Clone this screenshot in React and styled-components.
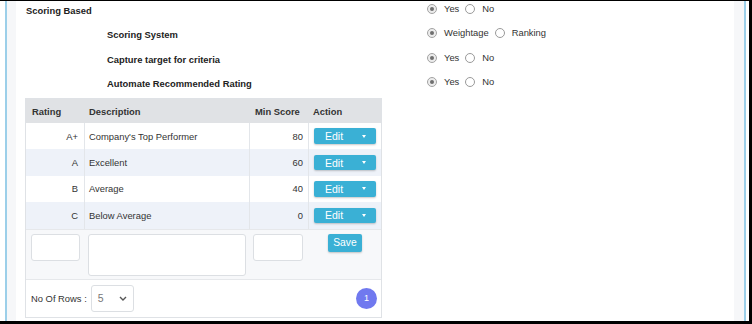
import React from "react";
import styled, { createGlobalStyle } from "styled-components";

const GlobalStyle = createGlobalStyle`
  html, body { margin: 0; padding: 0; background: #fff; }
  body { font-family: "Liberation Sans", Arial, sans-serif; }
  *, *::before, *::after { box-sizing: border-box; }
`;

const Frame = styled.div`
  width: 752px;
  height: 324px;
  border-top: 1px solid #000;
  border-right: 3px solid #000;
  border-bottom: 3px solid #000;
  background: #fff;
  padding: 0 3px 0 5px;
  display: flex;
`;

const Rail = styled.div`
  flex: 1;
  display: flex;
  border-left: 2px solid #9ccfe9;
  border-right: 2px solid #9ccfe9;
  background: #f6f7f9;
  padding: 0 10px 0 9px;
`;

const Main = styled.main`
  flex: 1;
  background: #fff;
  padding-left: 9px;
  display: flex;
  flex-direction: column;
  font-size: 9.4px;
  color: #333;
`;

const Form = styled.section`
  display: flex;
  flex-direction: column;
`;

const FormRow = styled.div`
  height: 24.25px;
  display: flex;
  align-items: flex-start;
`;

const Label = styled.div`
  width: 402px;
  padding-left: ${(p) => (p.$sub ? 82 : 1)}px;
  margin-top: 4px;
  font-weight: bold;
  color: #222;
  line-height: 11px;
`;

const Options = styled.div`
  margin-top: 3px;
  height: 10px;
  display: flex;
  align-items: center;
`;

const Radio = styled.span`
  width: 10px;
  height: 10px;
  border-radius: 50%;
  border: 1px solid ${(p) => (p.$on ? "#a3a3a3" : "#9a9a9a")};
  background: ${(p) => (p.$on ? "#ececec" : "#fff")};
  display: flex;
  align-items: center;
  justify-content: center;
  margin-right: 7px;
  &::after {
    content: "";
    width: 4px;
    height: 4px;
    border-radius: 50%;
    background: ${(p) => (p.$on ? "#6f6f6f" : "transparent")};
  }
`;

const OptText = styled.span`
  color: #333;
  line-height: 10px;
  margin-right: 6px;
`;

const Table = styled.div`
  width: 357px;
  border: 1px solid #dfe2e6;
  display: flex;
  flex-direction: column;
`;

const Grid = styled.div`
  display: grid;
  grid-template-columns: 58px 165px 59px 73px;
  height: ${(p) => p.$h}px;
  background: ${(p) => p.$bg};
`;

const Cell = styled.div`
  display: flex;
  align-items: center;
  justify-content: ${(p) => (p.$right ? "flex-end" : "flex-start")};
  padding: 0 ${(p) => p.$pr || 0}px 0 ${(p) => p.$pl || 0}px;
  border-left: ${(p) => (p.$line ? "1px solid #e3e6ea" : "none")};
  font-weight: ${(p) => (p.$head ? "bold" : "normal")};
  color: #333;
  white-space: nowrap;
`;

const EditButton = styled.button`
  width: 62px;
  height: 15.5px;
  margin-left: 5px;
  border: none;
  border-radius: 2px;
  background: #3ab0d5;
  box-shadow: 0 1px 2px rgba(0, 0, 0, 0.22);
  color: #fff;
  font-family: "Liberation Sans", Arial, sans-serif;
  font-size: 10.5px;
  display: flex;
  align-items: center;
  padding: 0 0 0 11px;
  justify-content: space-between;
`;

const Caret = styled.span`
  width: 0;
  height: 0;
  border-left: 2.5px solid transparent;
  border-right: 2.5px solid transparent;
  border-top: 3px solid #fff;
  margin-right: 10px;
`;

const EntryRow = styled.div`
  display: grid;
  grid-template-columns: 58px 165px 59px 73px;
  height: 50px;
  background: #f7f8fa;
  border-top: 1px solid #e6e8eb;
  align-items: start;
`;

const EntryCell = styled.div`
  padding: 4px 0 0 ${(p) => p.$pl}px;
  display: flex;
  justify-content: ${(p) => (p.$center ? "center" : "flex-start")};
`;

const Field = styled.div`
  width: ${(p) => p.$w}px;
  height: ${(p) => p.$h}px;
  background: #fff;
  border: 1px solid #dcdfe3;
  border-radius: 3px;
`;

const SaveButton = styled.button`
  width: 34px;
  height: 18px;
  border: none;
  border-radius: 2px;
  background: #3ab0d5;
  box-shadow: 0 1px 2px rgba(0, 0, 0, 0.22);
  color: #fff;
  font-family: "Liberation Sans", Arial, sans-serif;
  font-size: 10.3px;
  padding: 0;
  margin-left: 1px;
`;

const Footer = styled.div`
  height: 38px;
  border-top: 1px solid #e6e8eb;
  display: flex;
  align-items: center;
  padding: 0 4px 0 5px;
  background: #fff;
`;

const RowsLabel = styled.span`
  color: #333;
`;

const Select = styled.div`
  width: 43px;
  height: 27px;
  margin-left: 4px;
  border: 1px solid #dcdfe3;
  border-radius: 3px;
  display: flex;
  align-items: center;
  justify-content: space-between;
  padding: 0 6px 0 6px;
  color: #777;
  font-size: 10.5px;
`;

const Spacer = styled.div`
  flex: 1;
`;

const PageDot = styled.span`
  width: 21px;
  height: 21px;
  border-radius: 50%;
  background: #7079ef;
  color: #fff;
  font-size: 9px;
  display: flex;
  align-items: center;
  justify-content: center;
`;

const settings = [
  { label: "Scoring Based", sub: false, opts: ["Yes", "No"] },
  { label: "Scoring System", sub: true, opts: ["Weightage", "Ranking"] },
  { label: "Capture target for criteria", sub: true, opts: ["Yes", "No"] },
  { label: "Automate Recommended Rating", sub: true, opts: ["Yes", "No"] },
];

const ratings = [
  ["A+", "Company's Top Performer", 80],
  ["A", "Excellent", 60],
  ["B", "Average", 40],
  ["C", "Below Average", 0],
];

export default function App() {
  return (
    <>
      <GlobalStyle />
      <Frame>
        <Rail>
          <Main>
            <Form>
              {settings.map((s) => (
                <FormRow key={s.label}>
                  <Label $sub={s.sub}>{s.label}</Label>
                  <Options>
                    {s.opts.map((o, i) => (
                      <React.Fragment key={o}>
                        <Radio $on={i === 0} />
                        <OptText>{o}</OptText>
                      </React.Fragment>
                    ))}
                  </Options>
                </FormRow>
              ))}
            </Form>
            <Table>
              <Grid $h={24} $bg="#e0e2e5">
                <Cell $head $pl={6}>Rating</Cell>
                <Cell $head $pl={5}>Description</Cell>
                <Cell $head $pl={6}>Min Score</Cell>
                <Cell $head $pl={5}>Action</Cell>
              </Grid>
              {ratings.map(([r, d, m], i) => (
                <Grid key={r} $h={26.4} $bg={i % 2 ? "#eef2f9" : "#fff"}>
                  <Cell $right $pr={6}>{r}</Cell>
                  <Cell $line $pl={4}>{d}</Cell>
                  <Cell $line $right $pr={5}>{m}</Cell>
                  <Cell $line>
                    <EditButton>
                      Edit
                      <Caret />
                    </EditButton>
                  </Cell>
                </Grid>
              ))}
              <EntryRow>
                <EntryCell $pl={5}><Field $w={49} $h={27} /></EntryCell>
                <EntryCell $pl={4}><Field $w={158} $h={42} /></EntryCell>
                <EntryCell $pl={4}><Field $w={50} $h={27} /></EntryCell>
                <EntryCell $center $pl={0}><SaveButton>Save</SaveButton></EntryCell>
              </EntryRow>
              <Footer>
                <RowsLabel>No Of Rows :</RowsLabel>
                <Select>
                  5
                  <svg width="8" height="5" viewBox="0 0 8 5">
                    <path d="M1 1l3 3 3-3" fill="none" stroke="#555" strokeWidth="1.4" />
                  </svg>
                </Select>
                <Spacer />
                <PageDot>1</PageDot>
              </Footer>
            </Table>
          </Main>
        </Rail>
      </Frame>
    </>
  );
}
